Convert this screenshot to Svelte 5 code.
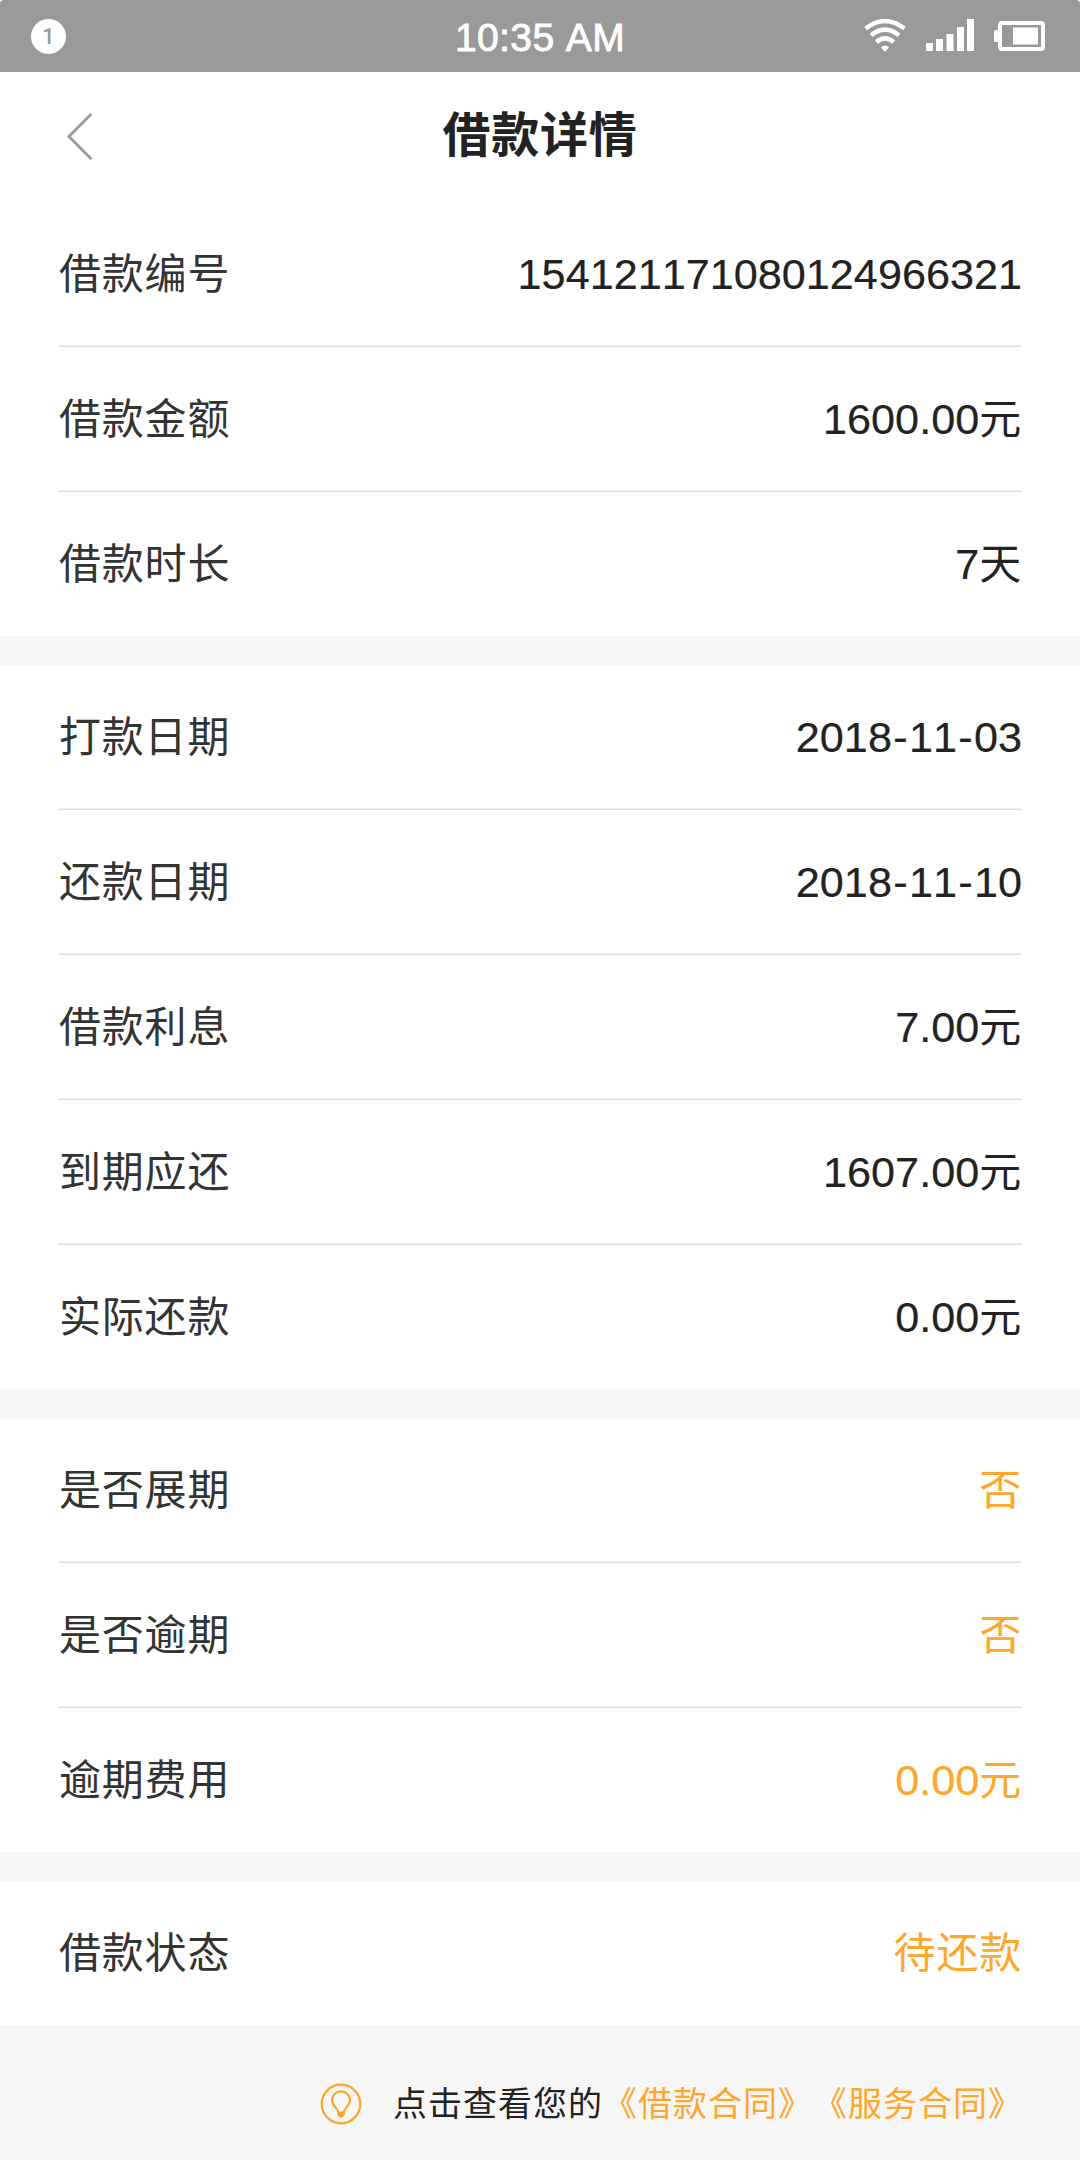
<script>
  const groups = [
    [
      { label: '借款编号', value: '154121171080124966321' },
      { label: '借款金额', value: '1600.00', unit: '元' },
      { label: '借款时长', value: '7', unit: '天' },
    ],
    [
      { label: '打款日期', value: '2018-11-03' },
      { label: '还款日期', value: '2018-11-10' },
      { label: '借款利息', value: '7.00', unit: '元' },
      { label: '到期应还', value: '1607.00', unit: '元' },
      { label: '实际还款', value: '0.00', unit: '元' },
    ],
    [
      { label: '是否展期', unit: '否', accent: true },
      { label: '是否逾期', unit: '否', accent: true },
      { label: '逾期费用', value: '0.00', unit: '元', accent: true },
    ],
    [{ label: '借款状态', unit: '待还款', accent: true }],
  ];
</script>

<div class="screen">
  <div class="status">
    <span class="count">1</span>
    <span class="time">10:35 AM</span>
    <div class="indicators">
      <svg class="wifi" width="42" height="34" viewBox="0 0 42 34" fill="none" stroke="#fff" stroke-width="4.4">
        <path d="M1.6 9.6Q21-5.6 40.4 9.6" />
        <path d="M7 16.4Q21 4.8 35 16.4" />
        <path d="M12.4 23Q21 15.8 29.6 23" />
        <path d="M17 28.2Q21 24.8 25 28.2L21 33Z" fill="#fff" stroke="none" />
      </svg>
      <svg class="signal" width="48" height="32" viewBox="0 0 48 32" fill="#fff">
        <rect x="0" y="24" width="7" height="8" />
        <rect x="10" y="20" width="7" height="12" />
        <rect x="20.5" y="15" width="7" height="17" />
        <rect x="31" y="8" width="7" height="24" />
        <rect x="41" y="0" width="7" height="32" />
      </svg>
      <svg class="battery" width="51" height="30" viewBox="0 0 51 30">
        <rect x="6" y="2" width="43" height="26" rx="2" fill="none" stroke="#fff" stroke-width="4" />
        <rect x="0" y="9" width="5" height="12" rx="1.5" fill="#fff" />
        <rect x="19" y="6.5" width="25" height="17" fill="#fff" />
      </svg>
    </div>
  </div>

  <header>
    <svg class="back" width="25" height="47" viewBox="0 0 25 47" fill="none" stroke="#999" stroke-width="2.8" stroke-linecap="round">
      <path d="M23.5 1.8L2 23.5L23.5 45.2" />
    </svg>
    <h1>借款详情</h1>
  </header>

  <main>
    {#each groups as rows}
      <section>
        {#each rows as row}
          <div class="row">
            <span class="label">{row.label}</span>
            <span class="value" class:accent={row.accent} class:with-unit={row.unit}>
              {#if row.value}<span class="digits">{#each row.value.split('-') as part, i}{#if i}<span class="dash">-</span>{/if}{part}{/each}</span>{/if}{#if row.unit}<span class="unit">{row.unit}</span>{/if}
            </span>
          </div>
        {/each}
      </section>
    {/each}
  </main>

  <footer>
    <svg width="42" height="42" viewBox="0 0 42 42" fill="none" stroke="#ffa62b" stroke-width="2.2">
      <circle cx="21" cy="21" r="19.3" />
      <path d="M18.3 31V29.5C18.3 25 12 23.5 12 17.3A9 9 0 0 1 30 17.3C30 23.5 23.7 25 23.7 29.5V31Z" />
      <path d="M18.3 29H23.7V32.5L22.5 34H19.5L18.3 32.5Z" fill="#ffa62b" stroke-width="1" />
    </svg>
    <span class="hint">点击查看您的</span>
    <span class="link">《借款合同》</span>
    <span class="link">《服务合同》</span>
  </footer>
</div>

<style>
  :global(body) {
    margin: 0;
    background: #fff;
  }

  .screen {
    width: 1080px;
    height: 2160px;
    display: flex;
    flex-direction: column;
    overflow: hidden;
    border-radius: 4px;
    background: #f6f6f6;
    font-family: 'Liberation Sans', 'Noto Sans CJK SC', sans-serif;
    font-kerning: none;
    color: #222;
  }

  .status {
    box-sizing: border-box;
    height: 72px;
    flex: none;
    display: grid;
    grid-template-columns: 1fr auto 1fr;
    align-items: center;
    padding: 0 35px 0 31px;
    background: #999;
    color: #fff;
  }

  .count {
    width: 35px;
    height: 35px;
    border-radius: 50%;
    background: #fff;
    color: #999;
    font-family: Roboto, sans-serif;
    font-size: 21.6px;
    line-height: 36px;
    text-align: center;
    font-weight: 500;
  }

  .time {
    padding: 3px 0 0 4px;
    font-size: 39px;
    letter-spacing: 0.4px;
    line-height: 44px;
    -webkit-text-stroke: 0.9px #fff;
  }

  .indicators {
    display: flex;
    justify-content: flex-end;
    align-items: center;
  }

  .wifi {
    margin-right: 20px;
  }

  .signal {
    margin: 0 20px 2px 0;
  }

  header {
    box-sizing: border-box;
    height: 130px;
    padding-bottom: 2px;
    flex: none;
    display: grid;
    grid-template-columns: 1fr auto 1fr;
    align-items: center;
    background: #fff;
  }

  .back {
    margin-left: 67px;
  }

  h1 {
    margin: 0;
    font-size: 48px;
    letter-spacing: 0.8px;
    line-height: 72px;
    font-weight: 600;
  }

  main {
    display: flex;
    flex-direction: column;
    gap: 29px;
  }

  section {
    background: #fff;
    padding: 0 58px;
  }

  .row {
    box-sizing: border-box;
    height: 145px;
    display: flex;
    justify-content: space-between;
    align-items: center;
    padding-bottom: 2px;
    font-size: 42px;
    line-height: 64px;
    background: linear-gradient(#efefef 50%, #e0e0e0 50%) bottom / 100% 2px no-repeat;
  }

  .row:last-child {
    height: 144px;
    padding-bottom: 1px;
    background: none;
  }

  .label {
    color: #333;
    letter-spacing: 0.8px;
    padding: 2px 0 0 1px;
  }

  .value {
    display: flex;
    align-items: baseline;
  }

  .with-unit {
    padding-top: 2px;
  }

  .digits {
    font-size: 43.2px;
    -webkit-text-stroke: 0.2px currentColor;
  }

  .dash {
    display: inline-block;
    width: 17px;
    text-align: center;
  }

  .unit {
    letter-spacing: 0.8px;
  }

  .accent,
  .link {
    color: #ffa62b;
  }

  footer {
    flex: 1;
    display: flex;
    align-items: center;
    justify-content: flex-end;
    padding: 22px 57px 0 0;
    font-size: 34px;
    letter-spacing: 1px;
    line-height: 52px;
    white-space: nowrap;
  }

  .hint {
    margin-left: 31px;
  }
</style>
